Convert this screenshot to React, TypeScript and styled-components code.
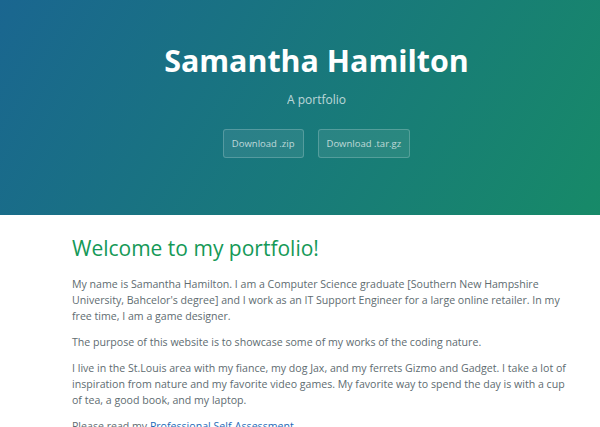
import React from "react";
import styled, { createGlobalStyle } from "styled-components";

const GlobalStyle = createGlobalStyle`
  html, body { margin: 0; padding: 0; }
  body {
    font-family: "Open Sans", "Helvetica Neue", Helvetica, Arial, sans-serif;
    line-height: 1.5;
    color: #606c71;
    background: #fff;
  }
  * { box-sizing: border-box; }
`;

const PageHeader = styled.header`
  color: #fff;
  text-align: center;
  background-color: #187878;
  background-image: linear-gradient(120deg, #1a6690, #178a68);
  padding: 38px 39px 57px 72px;
`;

const ProjectName = styled.h1`
  margin: 0 0 7px;
  font-size: 30.4px;
  line-height: 46px;
  font-weight: 700;
`;

const Tagline = styled.h2`
  margin: 0 0 20px;
  font-size: 12px;
  line-height: 18px;
  font-weight: 400;
  opacity: 0.7;
`;

const ButtonRow = styled.div`
  display: flex;
  justify-content: center;
  gap: 14px;
`;

const Btn = styled.a`
  display: inline-block;
  color: rgba(255, 255, 255, 0.7);
  background-color: rgba(255, 255, 255, 0.08);
  border: 1px solid rgba(255, 255, 255, 0.2);
  border-radius: 3px;
  padding: 6px 8px;
  font-size: 9.5px;
  line-height: 15px;
  text-decoration: none;
`;

const MainContent = styled.main`
  padding: 18px 31px 20px 72px;
  font-size: 10.6px;
  line-height: 16px;
  word-wrap: normal;
`;

const Heading = styled.h1`
  margin: 0 0 11px;
  font-size: 21px;
  line-height: 31.5px;
  font-weight: 400;
  color: #159957;
`;

const Para = styled.p`
  margin: 0 0 10px;
`;

const Link = styled.a`
  color: #1e6bb8;
  text-decoration: none;
`;

export default function App() {
  return (
    <>
      <GlobalStyle />
      <PageHeader>
        <ProjectName>Samantha Hamilton</ProjectName>
        <Tagline>A portfolio</Tagline>
        <ButtonRow>
          <Btn href="#">Download .zip</Btn>
          <Btn href="#">Download .tar.gz</Btn>
        </ButtonRow>
      </PageHeader>
      <MainContent>
        <Heading>Welcome to my portfolio!</Heading>
        <Para>
          My name is Samantha Hamilton. I am a Computer Science graduate [Southern New Hampshire
          University, Bahcelor's degree] and I work as an IT Support Engineer for a large online
          retailer. In my free time, I am a game designer.
        </Para>
        <Para>The purpose of this website is to showcase some of my works of the coding nature.</Para>
        <Para>
          I live in the St.Louis area with my fiance, my dog Jax, and my ferrets Gizmo and Gadget. I
          take a lot of inspiration from nature and my favorite video games. My favorite way to spend
          the day is with a cup of tea, a good book, and my laptop.
        </Para>
        <Para>
          Please read my <Link href="#">Professional Self-Assessment</Link>.
        </Para>
      </MainContent>
    </>
  );
}
